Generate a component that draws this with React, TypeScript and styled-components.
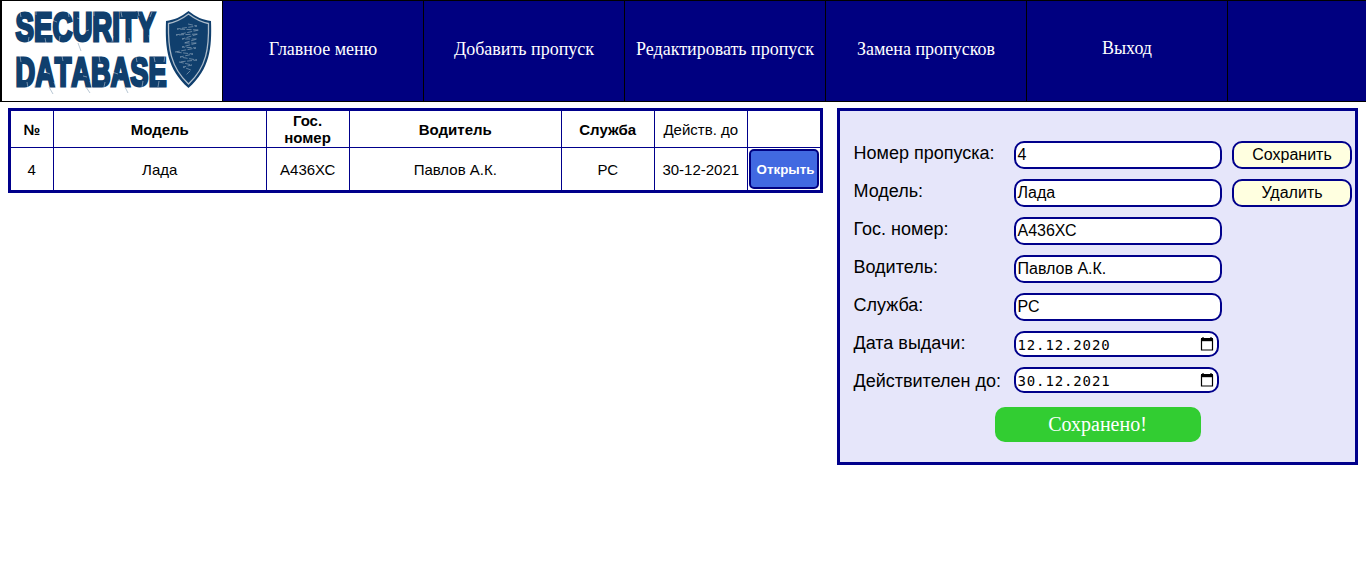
import React from "react";
import styled, { createGlobalStyle } from "styled-components";

const GlobalStyle = createGlobalStyle`
  * { box-sizing: border-box; }
  body { margin: 0; background: #fff; color: #000; font-family: "Liberation Sans", Arial, sans-serif; }
`;

const Header = styled.header`
  display: flex;
  height: 102px;
  background: navy;
  border: solid #000;
  border-width: 1px 0 1px 2px;
`;

const LogoLink = styled.a`
  flex: 0 0 220px;
  height: 100px;
  background: #fff;
`;

const LogoSvg = styled.svg`
  display: block;
  overflow: visible;
`;

const NavItem = styled.a<{ $raised?: boolean }>`
  flex: 0 0 201px;
  display: flex;
  align-items: center;
  justify-content: center;
  border-left: 1px solid #000;
  padding-bottom: ${(p) => (p.$raised ? "5px" : "3px")};
  color: #fff;
  font: 18px "Liberation Serif", "Times New Roman", serif;
  white-space: nowrap;
`;

const NavRest = styled.div`
  flex: 1;
  border-left: 1px solid #000;
`;

const Main = styled.main`
  display: flex;
  align-items: flex-start;
  justify-content: space-between;
  padding: 6px 8px 0;
`;

const PassTable = styled.div`
  display: grid;
  grid-template-columns: 42px 213px 83px 212px 93px 93px 73px;
  grid-template-rows: 36px 43px;
  width: 815px;
  border: 3px solid darkblue;
  font-size: 15px;
`;

const Cell = styled.div<{ $first?: boolean; $body?: boolean; $bold?: boolean; $wrapped?: boolean }>`
  display: flex;
  align-items: center;
  justify-content: center;
  text-align: center;
  line-height: 17px;
  border-left: ${(p) => (p.$first ? "0" : "1px solid darkblue")};
  border-top: ${(p) => (p.$body ? "1px solid darkblue" : "0")};
  font-weight: ${(p) => (p.$bold ? 700 : 400)};
  padding: ${(p) => (p.$wrapped ? "0 1px 1px 0" : "1px 0.5px 0 0")};
`;

const ButtonCell = styled(Cell)`
  padding: 0;
`;

const OpenButton = styled.button`
  width: 70px;
  height: 40px;
  padding: 0 0 0 3px;
  border: 2px solid navy;
  border-radius: 5px;
  background: royalblue;
  color: #fff;
  font: bold 13.33px "Liberation Sans", Arial, sans-serif;
  white-space: nowrap;
`;

const Panel = styled.section`
  width: 521px;
  height: 357px;
  padding: 30px 3px 0 13px;
  border: 3px solid darkblue;
  background: lavender;
`;

const FormColumns = styled.div`
  display: grid;
  grid-template-columns: 161px 208px 120px;
`;

const Labels = styled.div`
  display: flex;
  flex-direction: column;
`;

const Label = styled.label`
  height: 38px;
  padding-left: 0.5px;
  line-height: 24px;
  font-size: 18px;
  white-space: nowrap;
`;

const Stack = styled.div<{ $offset?: boolean }>`
  display: flex;
  flex-direction: column;
  gap: 10px;
  margin-left: ${(p) => (p.$offset ? "10px" : "0")};
`;

const Field = styled.div`
  width: 208px;
  height: 28px;
  padding-left: 1.5px;
  border: 2px solid darkblue;
  border-radius: 10px;
  background: #fff;
  font-size: 16px;
  line-height: 23px;
`;

const DateField = styled(Field)`
  display: flex;
  align-items: center;
  justify-content: space-between;
  width: 205px;
  height: 26px;
  padding: 0 3px 0 1.5px;
  font-family: "DejaVu Sans Mono", Consolas, monospace;
  font-size: 14px;
  letter-spacing: 0.87px;
`;

const DateText = styled.span`
  padding-top: 2px;
`;

const ActionButton = styled.button`
  width: 120px;
  height: 28px;
  padding: 0 0 1px;
  border: 2px solid darkblue;
  border-radius: 10px;
  background: lightyellow;
  color: #000;
  font: 16px "Liberation Sans", Arial, sans-serif;
`;

const SavedNotice = styled.div`
  width: 206px;
  height: 35px;
  margin: 0 0 0 142px;
  padding-right: 1px;
  border-radius: 10px;
  background: limegreen;
  color: #fff;
  font: 20px/34px "Liberation Serif", "Times New Roman", serif;
  text-align: center;
`;

const LogoWord = styled.text`
  font: 700 40px "Liberation Sans", Arial, sans-serif;
  font-kerning: none;
  fill: #103f6d;
  stroke: #103f6d;
  stroke-width: 2.5px;
  vector-effect: non-scaling-stroke;
`;

const Logo = () => (
  <LogoSvg width="220" height="100" viewBox="2 1 220 100" aria-label="Security Database">
    <LogoWord transform="translate(15.500 41.200) scale(.692 1)">SECURITY</LogoWord>
    <LogoWord transform="translate(15.500 86.300) scale(.680 1)">DATABASE</LogoWord>
    <g stroke="#fff" strokeWidth=".6" fill="none" opacity=".7">
      <path d="M20 12l1 5M29 37l-1 6M36 11v4M45 38l1 5M52 20l5 2M60 36l-1 6M68 11l1 6M77 18l8 2M83 32l6-2M94 11v5M100 36l2 7M111 11v6M113 36l-1 6M121 12l1 5M129 38l1 5M138 11l1 5M149 35l1 7M152 12l-2 5" />
      <path d="M20 56l1 6M27 82l1 6M36 79l-1 8M45 72l5 2M54 82l2 6M62 56l1 5M70 80l1 7M83 76l4 1M90 81l2 7M99 56l1 6M105 82l-1 5M112 72l6 2M119 79l2 8M128 73l4 1M136 57l1 5M143 81l-1 6M154 57l1 5M159 81l-1 6M165 56l-1 6" />
    </g>
    <path d="M78 43l3 8M49 87l4 7M86 87l4 6M125 87l3 6" fill="none" stroke="#9aafc2" strokeWidth=".7" />
    <path d="M188.500 11C181 17 174 20 166 21C165 48 167 69 188.500 88C210 69 212 48 211 21C203 20 196 17 188.500 11Z" fill="#103f6d" />
    <path d="M188.500 14C182 19 176 22 168.500 23.500C168 47 170 67 188.500 84C207 67 209 47 208.500 23.500C201 22 195 19 188.500 14Z" fill="none" stroke="#aebdcb" strokeWidth="1.300" />
    <path d="M188 24l9 2-20 3 22 1-23 5 22-1-16 5 15 0-13 4 13 0-15 4 14 1-21 4 18 2-13 3 17 3-18 2 13 3-9 2 8 3-5 5" fill="none" stroke="#8ba2b7" strokeWidth=".7" strokeDasharray="5 1.500" />
  </LogoSvg>
);

const CalendarIcon = () => (
  <svg width="14" height="16" viewBox="0 0 14 16" aria-hidden="true">
    <path d="M3 1v2M11 1v2" stroke="#000" strokeWidth="1.200" />
    <path d="M1.500 3.500h11v10.500h-11z" fill="none" stroke="#000" strokeWidth="1.200" />
    <path d="M1 2h12v3.200H1z" />
  </svg>
);

const labels = ["Номер пропуска:", "Модель:", "Гос. номер:", "Водитель:", "Служба:", "Дата выдачи:", "Действителен до:"];
const values = ["4", "Лада", "А436ХС", "Павлов А.К.", "РС"];
const dates = ["12.12.2020", "30.12.2021"];

export default function App() {
  return (
    <>
      <GlobalStyle />
      <Header>
        <LogoLink><Logo /></LogoLink>
        <NavItem>Главное меню</NavItem>
        <NavItem>Добавить пропуск</NavItem>
        <NavItem>Редактировать пропуск</NavItem>
        <NavItem>Замена пропусков</NavItem>
        <NavItem $raised>Выход</NavItem>
        <NavRest />
      </Header>
      <Main>
        <PassTable>
          <Cell $first $bold>№</Cell>
          <Cell $bold>Модель</Cell>
          <Cell $bold $wrapped>Гос.<br />номер</Cell>
          <Cell $bold>Водитель</Cell>
          <Cell $bold>Служба</Cell>
          <Cell>Действ. до</Cell>
          <Cell />
          <Cell $first $body>4</Cell>
          <Cell $body>Лада</Cell>
          <Cell $body>А436ХС</Cell>
          <Cell $body>Павлов А.К.</Cell>
          <Cell $body>РС</Cell>
          <Cell $body>30-12-2021</Cell>
          <ButtonCell $body><OpenButton>Открыть</OpenButton></ButtonCell>
        </PassTable>
        <Panel>
          <FormColumns>
            <Labels>{labels.map((l) => <Label key={l}>{l}</Label>)}</Labels>
            <Stack>
              {values.map((v) => <Field key={v}>{v}</Field>)}
              {dates.map((d) => (
                <DateField key={d}><DateText>{d}</DateText><CalendarIcon /></DateField>
              ))}
            </Stack>
            <Stack $offset>
              <ActionButton>Сохранить</ActionButton>
              <ActionButton>Удалить</ActionButton>
            </Stack>
          </FormColumns>
          <SavedNotice>Сохранено!</SavedNotice>
        </Panel>
      </Main>
    </>
  );
}
